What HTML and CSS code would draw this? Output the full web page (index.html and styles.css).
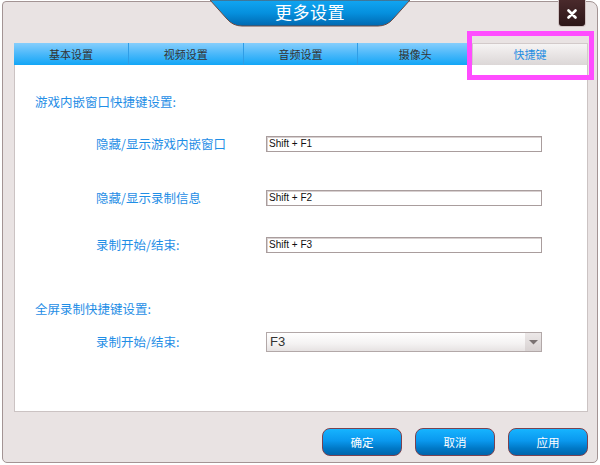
FILE: index.html
```html
<!DOCTYPE html>
<html lang="zh">
<head>
<meta charset="utf-8">
<title>更多设置</title>
<link rel="stylesheet" href="styles.css">
</head>
<body>
<div class="window">
  <div class="header">
    <div class="title">
      <svg class="title-bg" width="200" height="27" viewBox="0 0 200 27">
        <defs>
          <linearGradient id="tg" x1="0" y1="0" x2="0" y2="1">
            <stop offset="0" stop-color="#12a6f2"/>
            <stop offset="0.5" stop-color="#0590de"/>
            <stop offset="1" stop-color="#0068b0"/>
          </linearGradient>
        </defs>
        <path d="M0 0 L17 19 Q23 26 32 26 L168 26 Q177 26 183 19 L200 0 Z" fill="url(#tg)" stroke="#6a4a44" stroke-width="1"/>
      </svg>
      <span class="title-text">更多设置</span>
    </div>
    <div class="close">
      <svg width="10" height="10" viewBox="0 0 10 10">
        <path d="M1.5 1.5 L8.5 8.5 M8.5 1.5 L1.5 8.5" stroke="#fff" stroke-width="2.6" stroke-linecap="round"/>
      </svg>
    </div>
  </div>

  <div class="tabs">
    <div class="tab">基本设置</div>
    <div class="tab">视频设置</div>
    <div class="tab">音频设置</div>
    <div class="tab">摄像头</div>
    <div class="tab active">快捷键</div>
    <div class="highlight"></div>
  </div>

  <div class="panel">
    <div class="heading h1">游戏内嵌窗口快捷键设置:</div>
    <div class="row r1">
      <div class="label">隐藏/显示游戏内嵌窗口</div>
      <div class="input">Shift + F1</div>
    </div>
    <div class="row r2">
      <div class="label">隐藏/显示录制信息</div>
      <div class="input">Shift + F2</div>
    </div>
    <div class="row r3">
      <div class="label">录制开始/结束:</div>
      <div class="input">Shift + F3</div>
    </div>
    <div class="heading h2">全屏录制快捷键设置:</div>
    <div class="row r4">
      <div class="label">录制开始/结束:</div>
      <div class="select">
        <span class="select-text">F3</span>
        <span class="select-arrow">
          <svg width="9" height="5" viewBox="0 0 9 5"><path d="M0 0 H9 L4.5 4.5 Z" fill="#7a7272"/></svg>
        </span>
      </div>
    </div>
  </div>

  <div class="footer">
    <div class="btn">确定</div>
    <div class="btn">取消</div>
    <div class="btn">应用</div>
  </div>
</div>
</body>
</html>
```

FILE: styles.css
```css
html, body {
  margin: 0;
  padding: 0;
  background: #ffffff;
}

body {
  font-family: "Noto Sans CJK SC", "Noto Sans", sans-serif;
}

.window {
  margin: 1px 0 0 2px;
  width: 596px;
  height: 462px;
  box-sizing: border-box;
  background: #e9e3e3;
  border: 1px solid #a39494;
  border-radius: 4px 8px 5px 5px;
  display: flex;
  flex-direction: column;
}

.header {
  height: 41px;
  display: flex;
  align-items: flex-start;
}

.title {
  position: relative;
  width: 200px;
  height: 27px;
  margin-top: -2px;
  margin-left: 207px;
  display: flex;
  align-items: center;
  justify-content: center;
}

.title-bg {
  position: absolute;
  left: 0;
  top: 0;
}

.title-text {
  position: relative;
  color: #ffffff;
  font-size: 17px;
  line-height: 20px;
  margin-top: -3px;
  letter-spacing: 0.5px;
}

.close {
  margin-left: auto;
  margin-right: 11px;
  margin-top: -2px;
  width: 28px;
  height: 27px;
  box-sizing: border-box;
  background: linear-gradient(#4a2a2c, #2c1618);
  border: 1px solid #cfc2c2;
  border-top: none;
  border-radius: 0 0 4px 4px;
  display: flex;
  align-items: center;
  justify-content: center;
  padding-top: 1px;
}

.tabs {
  position: relative;
  margin-left: 11px;
  width: 574px;
  height: 22px;
  display: flex;
}

.tab {
  flex: 1;
  height: 22px;
  box-sizing: border-box;
  background: linear-gradient(#86cefc, #4ab8fa 50%, #12a6f6);
  border-left: 1px solid #2f9de6;
  color: #333333;
  font-size: 11px;
  line-height: 22px;
  text-align: center;
}

.tab:first-child {
  border-left: none;
}

.tab.active {
  background: linear-gradient(#f6f4f4, #e6e2e2 60%, #dcd7d7);
  border: 1px solid #d2caca;
  border-bottom: none;
  color: #1f8ee2;
  line-height: 21px;
}

.highlight {
  position: absolute;
  left: 453px;
  top: -12px;
  width: 127px;
  height: 49px;
  box-sizing: border-box;
  border: 5px solid #ff4cff;
}

.panel {
  margin-left: 11px;
  width: 574px;
  height: 347px;
  box-sizing: border-box;
  background: #ffffff;
  border: 1px solid #cbc3c3;
  border-top: none;
  display: flex;
  flex-direction: column;
}

.heading {
  color: #1f8ee6;
  font-size: 12.5px;
  line-height: 16px;
  padding-left: 20px;
}

.h1 { margin-top: 29px; }
.h2 { margin-top: 48px; }

.row {
  display: flex;
  align-items: center;
  padding-left: 81px;
}

.r1 { margin-top: 26px; }
.r2 { margin-top: 38px; }
.r3 { margin-top: 31px; }
.r4 { margin-top: 15px; }

.label {
  width: 170px;
  color: #1f8ee6;
  font-size: 12.5px;
  line-height: 16px;
}

.input {
  width: 276px;
  height: 16px;
  box-sizing: border-box;
  border: 1px solid #a99d9d;
  box-shadow: inset 1px 1px 0 #d8d0d0;
  background: #ffffff;
  font-family: "Liberation Sans", Arial, sans-serif;
  font-size: 10px;
  line-height: 14px;
  color: #111111;
  padding-left: 2px;
}

.select {
  width: 276px;
  height: 20px;
  box-sizing: border-box;
  border: 1px solid #b2a8a8;
  background: linear-gradient(#ffffff, #f4f2f2 60%, #e6e2e2);
  display: flex;
  align-items: center;
}

.select-text {
  flex: 1;
  font-family: "Liberation Sans", Arial, sans-serif;
  font-size: 13px;
  color: #333333;
  padding-left: 3px;
  line-height: 18px;
}

.select-arrow {
  width: 16px;
  height: 18px;
  background: linear-gradient(#ece8e8, #d8d2d2);
  display: flex;
  align-items: center;
  justify-content: center;
}

.footer {
  margin-top: 16px;
  display: flex;
  justify-content: flex-end;
  gap: 13px;
  padding-right: 9px;
}

.btn {
  width: 80px;
  height: 28px;
  box-sizing: border-box;
  border: 1px solid #7a4250;
  border-radius: 8px;
  background: linear-gradient(#16b4ff, #0a98ee 45%, #0078c6 75%, #0064aa);
  color: #ffffff;
  font-size: 11.5px;
  line-height: 26px;
  text-align: center;
}
```
